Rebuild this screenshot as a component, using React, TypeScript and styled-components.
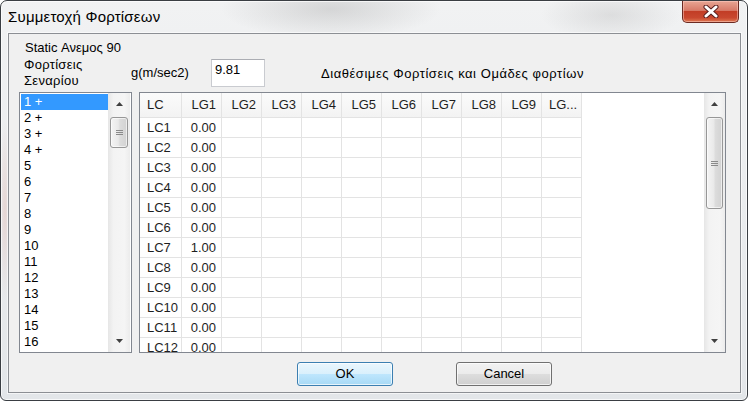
import React from 'react';
import styled, {createGlobalStyle} from 'styled-components';

const GlobalStyle = createGlobalStyle`
  html, body {
    margin: 0;
    padding: 0;
    background: #ffffff;
  }
  body {
    font-family: 'Liberation Sans', Arial, sans-serif;
    font-size: 13px;
    color: #000;
  }
  * {
    box-sizing: border-box;
  }
`;

const scenario = ['1 +', '2 +', '3 +', '4 +', '5', '6', '7', '8', '9', '10', '11', '12', '13', '14', '15', '16'];
const groups = ['LG1', 'LG2', 'LG3', 'LG4', 'LG5', 'LG6', 'LG7', 'LG8', 'LG9', 'LG...'];
const cases = Array.from({length: 12}, (_, i) => ({
  name: `LC${i + 1}`,
  value: i === 6 ? '1.00' : '0.00',
}));

const Arrow = ({up}: {up?: boolean}) => (
  <svg width="7" height="4" viewBox="0 0 7 4">
    <polygon points={up ? '3.5,0 7,4 0,4' : '0,0 7,0 3.5,4'} fill="#404040" />
  </svg>
);

const ScrollBar = ({thumbHeight, width}: {thumbHeight: number; width: number}) => (
  <Bar $width={width}>
    <ArrowButton>
      <Arrow up />
    </ArrowButton>
    <Track>
      <Thumb $height={thumbHeight}>
        <Grip />
      </Thumb>
    </Track>
    <ArrowButton>
      <Arrow />
    </ArrowButton>
  </Bar>
);

const CloseIcon = () => (
  <svg width="16" height="13" viewBox="0 0 16 13">
    <path d="M3 2 L13 11 M13 2 L3 11" stroke="#5a2020" strokeWidth="5" strokeLinecap="round" />
    <path d="M3 2 L13 11 M13 2 L3 11" stroke="#ffffff" strokeWidth="3" strokeLinecap="round" />
  </svg>
);

const App = () => {
  return (
    <>
      <GlobalStyle />
      <Window>
        <TitleBar>
          <Title>Συμμετοχή Φορτίσεων</Title>
          <CloseButton>
            <CloseIcon />
          </CloseButton>
        </TitleBar>

        <Client>
          <Heading>Static Ανεμος 90</Heading>

          <ParamRow>
            <ScenarioLabel>
              Φορτίσεις
              <br />
              Σεναρίου
            </ScenarioLabel>
            <GLabel>g(m/sec2)</GLabel>
            <TextBox>9.81</TextBox>
            <GridCaption>Διαθέσιμες Φορτίσεις και Ομάδες φορτίων</GridCaption>
          </ParamRow>

          <MainRow>
            <ListBox>
              <Items>
                {scenario.map((s, i) => (
                  <Item key={s} $selected={i === 0}>
                    {s}
                  </Item>
                ))}
              </Items>
              <ScrollBar thumbHeight={31} width={22} />
            </ListBox>

            <Grid>
              <GridBody>
                <HeaderRow>
                  <HeadCell $first>LC</HeadCell>
                  {groups.map((g) => (
                    <HeadCell key={g}>{g}</HeadCell>
                  ))}
                </HeaderRow>
                {cases.map((c) => (
                  <DataRow key={c.name}>
                    <Cell $first>{c.name}</Cell>
                    {groups.map((g, j) => (
                      <Cell key={g}>{j === 0 ? c.value : ''}</Cell>
                    ))}
                  </DataRow>
                ))}
              </GridBody>
              <ScrollBar thumbHeight={92} width={21} />
            </Grid>
          </MainRow>

          <ButtonRow>
            <Button $default>OK</Button>
            <Button>Cancel</Button>
          </ButtonRow>
        </Client>
      </Window>
    </>
  );
};

const Window = styled.div`
  width: 748px;
  height: 401px;
  border: 1px solid #3a3e43;
  border-radius: 7px 7px 6px 6px;
  overflow: hidden;
  display: flex;
  flex-direction: column;
  background:
    radial-gradient(ellipse 110px 30px at 330px 8px, rgba(140, 140, 140, 0.28), transparent),
    radial-gradient(ellipse 70px 26px at 610px 14px, rgba(160, 160, 160, 0.25), transparent),
    radial-gradient(ellipse 6px 90px at 4px 210px, rgba(220, 170, 160, 0.35), transparent),
    linear-gradient(#f1f2f3, #e3e6e9);
  box-shadow: inset 0 0 0 1px rgba(255, 255, 255, 0.7);
`;

const TitleBar = styled.div`
  height: 32px;
  flex: none;
  display: flex;
  justify-content: space-between;
  align-items: flex-start;
  padding: 0 8px 0 7px;
`;

const Title = styled.div`
  margin-top: 7px;
  font-family: 'Liberation Sans', Arial, sans-serif;
  font-size: 15px;
  line-height: 18px;
  letter-spacing: 0.2px;
  color: #000;
`;

const CloseButton = styled.div`
  width: 57px;
  height: 22px;
  display: flex;
  align-items: center;
  justify-content: center;
  border: 1px solid #6b2a22;
  border-top: none;
  border-radius: 0 0 5px 5px;
  background: linear-gradient(#e8a594 0%, #d77a68 45%, #c23d26 50%, #c9482f 80%, #e07a54 100%);
  box-shadow: inset 0 0 0 1px rgba(255, 210, 200, 0.5);
`;

const Client = styled.div`
  width: 733px;
  height: 360px;
  margin-left: 7px;
  border: 1px solid #8c8f94;
  background: #f0f0f0;
  display: flex;
  flex-direction: column;
  padding: 6px 14px 6px 10px;
  box-shadow: 0 0 0 1px rgba(255, 255, 255, 0.6);
`;

const Heading = styled.div`
  height: 16px;
  line-height: 16px;
  margin-left: 6px;
`;

const ParamRow = styled.div`
  height: 36px;
  display: flex;
  align-items: flex-start;
  line-height: 16px;
`;

const ScenarioLabel = styled.div`
  width: 112px;
  margin-top: 1px;
  padding-left: 5px;
  letter-spacing: 0.3px;
`;

const GLabel = styled.div`
  width: 80px;
  margin-top: 9px;
`;

const TextBox = styled.div`
  width: 54px;
  height: 28px;
  margin-top: 3px;
  padding: 2px 3px;
  background: #fff;
  border: 1px solid #c9cbd0;
  border-top-color: #abadb3;
`;

const GridCaption = styled.div`
  margin-left: 56px;
  margin-top: 10px;
  letter-spacing: 0.55px;
`;

const MainRow = styled.div`
  height: 261px;
  display: flex;
  gap: 7px;
`;

const ListBox = styled.div`
  width: 113px;
  display: flex;
  border: 1px solid #828790;
  background: #fff;
  padding: 0 1px 0 1px;
`;

const Items = styled.div`
  width: 87px;
  padding-top: 1px;
  overflow: hidden;
`;

const Item = styled.div<{$selected?: boolean}>`
  height: 16px;
  line-height: 16px;
  padding-left: 3px;
  background: ${(p) => (p.$selected ? '#3399ff' : 'transparent')};
  color: ${(p) => (p.$selected ? '#fff' : '#000')};
`;

const Bar = styled.div<{$width: number}>`
  width: ${(p) => p.$width}px;
  flex: none;
  display: flex;
  flex-direction: column;
  background: linear-gradient(to right, #e6e6e6, #f3f3f3 25%, #f5f5f5 75%, #ececec);
`;

const ArrowButton = styled.div`
  height: 22px;
  flex: none;
  display: flex;
  align-items: center;
  justify-content: center;
`;

const Track = styled.div`
  flex: 1;
  padding: 2px 2px 0 2px;
`;

const Thumb = styled.div<{$height: number}>`
  height: ${(p) => p.$height}px;
  border: 1px solid #979797;
  border-radius: 3px;
  background: linear-gradient(to right, #f4f4f4, #e9e9e9 45%, #dcdcdc 55%, #d2d2d2);
  box-shadow: inset 0 0 0 1px rgba(255, 255, 255, 0.6);
  display: flex;
  align-items: center;
  justify-content: center;
`;

const Grip = styled.div`
  width: 7px;
  height: 5px;
  border-top: 1px solid #8a8a8a;
  border-bottom: 1px solid #8a8a8a;
  position: relative;

  &::after {
    content: '';
    position: absolute;
    left: 0;
    right: 0;
    top: 1px;
    border-top: 1px solid #8a8a8a;
  }
`;

const Grid = styled.div`
  width: 587px;
  display: flex;
  border: 1px solid #828790;
  background: #fff;
`;

const GridBody = styled.div`
  flex: 1;
  overflow: hidden;
`;

const HeaderRow = styled.div`
  display: flex;
  height: 25px;
`;

const DataRow = styled.div`
  display: flex;
  height: 20px;
`;

const HeadCell = styled.div<{$first?: boolean}>`
  width: ${(p) => (p.$first ? 42 : 40)}px;
  height: 25px;
  line-height: 24px;
  border-right: 1px solid #e3e3e3;
  border-bottom: 1px solid #e3e3e3;
  background: linear-gradient(#fbfbfb, #f3f3f3);
  text-align: ${(p) => (p.$first ? 'left' : 'right')};
  padding: 0 5px 0 7px;
  white-space: nowrap;
  color: #1e1e1e;
`;

const Cell = styled.div<{$first?: boolean}>`
  width: ${(p) => (p.$first ? 42 : 40)}px;
  height: 20px;
  line-height: 19px;
  border-right: 1px solid #e3e3e3;
  border-bottom: 1px solid #e3e3e3;
  text-align: ${(p) => (p.$first ? 'left' : 'right')};
  padding: 0 5px 0 7px;
  white-space: nowrap;
  color: #1e1e1e;
`;

const ButtonRow = styled.div`
  display: flex;
  gap: 63px;
  margin-top: 9px;
  padding-left: 278px;
`;

const Button = styled.div<{$default?: boolean}>`
  width: 96px;
  height: 24px;
  line-height: 22px;
  text-align: center;
  border-radius: 3px;
  border: 1px solid ${(p) => (p.$default ? '#3c7fb1' : '#707070')};
  background: ${(p) =>
    p.$default
      ? 'linear-gradient(#eaf6fd 0%, #d9f0fc 50%, #bee6fd 51%, #a7d9f5 100%)'
      : 'linear-gradient(#f2f2f2 0%, #ebebeb 50%, #dddddd 51%, #cfcfcf 100%)'};
  box-shadow: inset 0 0 0 1px rgba(255, 255, 255, 0.7);
  color: #000;
`;

export default App;
